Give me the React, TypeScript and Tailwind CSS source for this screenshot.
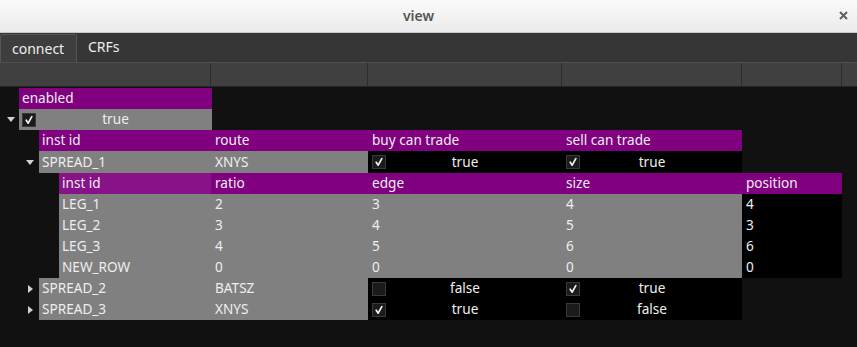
import React from "react";

const Check = () => (
  <svg width="10" height="10" viewBox="0 0 10 10">
    <path d="M2.2 5.2 L4.2 8.2 L7.8 1.6" stroke="#f2f2f2" strokeWidth="1.7" fill="none" strokeLinecap="round" strokeLinejoin="round" />
  </svg>
);

const Box = ({ on }: { on: boolean }) => (
  <div className="w-[14px] h-[14px] bg-[#1b1b1b] border border-[#3a3a3a] flex items-center justify-center shrink-0">
    {on ? <Check /> : null}
  </div>
);

const BoolCell = ({ on, w, bg = "bg-black" }: { on: boolean; w: string; bg?: string }) => (
  <div className={`${w} ${bg} h-full flex items-center pl-[4px]`}>
    <Box on={on} />
    <span className="flex-1 text-center">{on ? "true" : "false"}</span>
    <span className="w-[18px] shrink-0" />
  </div>
);

const Down = () => (
  <svg width="8" height="5" viewBox="0 0 8 5"><path d="M0 0 H8 L4 5 Z" fill="#d0d0d0" /></svg>
);
const Right = () => (
  <svg width="5" height="8" viewBox="0 0 5 8"><path d="M0 0 V8 L5 4 Z" fill="#d0d0d0" /></svg>
);

const Slot = ({ w, children }: { w: string; children?: React.ReactNode }) => (
  <div className={`${w} h-full flex justify-end shrink-0`}>
    <div className="w-[20px] h-full flex items-center justify-center pl-[2px]">{children}</div>
  </div>
);

const Txt = ({ w, bg, children, pl = "pl-[4px]" }: { w: string; bg: string; children?: React.ReactNode; pl?: string }) => (
  <div className={`${w} ${bg} h-full flex items-center ${pl} whitespace-nowrap`}>{children}</div>
);

export default function App() {
  const legs = [
    ["LEG_1", "2", "3", "4", "4"],
    ["LEG_2", "3", "4", "5", "3"],
    ["LEG_3", "4", "5", "6", "6"],
    ["NEW_ROW", "0", "0", "0", "0"],
  ];
  const P = "bg-[#800080]";
  const G = "bg-[#808080]";
  return (
    <div className="w-[857px] h-[347px] bg-[#111111] overflow-hidden text-[13.6px] text-[#eeeeee]" style={{ fontFamily: '"Noto Sans", "Open Sans", sans-serif' }}>
      {/* title bar */}
      <div className="h-[33px] bg-gradient-to-b from-[#fafafa] to-[#ebebeb] border-b border-[#c8c8c8] flex items-center">
        <div className="flex-1 text-center text-[#555555] font-semibold text-[14px] pl-[8px] pb-[2px]">view</div>
        <div className="w-[28px] flex items-center justify-center pb-[2px]">
          <svg width="9" height="9" viewBox="0 0 9 9"><path d="M1 1 L8 8 M8 1 L1 8" stroke="#5e5e5e" strokeWidth="2" /></svg>
        </div>
      </div>
      {/* tab bar */}
      <div className="h-[29px] bg-[#363636] flex items-end text-[14px]">
        <div className="h-[28px] w-[77px] bg-[#3e3e3e] border border-b-0 border-[#555555] rounded-t-[2px] flex items-center pl-[11px] text-[#eeeeee]">connect</div>
        <div className="h-[28px] flex items-center pl-[11px] pb-[3px] text-[#eeeeee]">CRFs</div>
      </div>
      {/* header */}
      <div className="h-[25px] bg-[#404040] border-t border-[#505050] border-b border-b-[#222222] flex">
        <div className="w-[211px] border-r border-[#2c2c2c]" />
        <div className="w-[157px] border-r border-[#2c2c2c]" />
        <div className="w-[194px] border-r border-[#2c2c2c]" />
        <div className="w-[180px] border-r border-[#2c2c2c]" />
        <div className="w-[100px] border-r border-[#2c2c2c]" />
        <div className="flex-1" />
      </div>
      {/* body */}
      <div className="pt-[1px]">
        {/* level 0 */}
        <div className="flex h-[21px]">
          <Slot w="w-[19px]" />
          <Txt w="w-[193px]" bg={P} pl="pl-[3px]">enabled</Txt>
        </div>
        <div className="flex h-[21px]">
          <Slot w="w-[19px]"><Down /></Slot>
          <div className={`w-[193px] ${G} h-full flex items-center pl-[3px]`}>
            <Box on={true} />
            <span className="flex-1 text-center">true</span>
            <span className="w-[17px]" />
          </div>
        </div>
        {/* level 1 header */}
        <div className="flex h-[21px]">
          <Slot w="w-[39px]" />
          <Txt w="w-[172px]" bg={P} pl="pl-[3px]">inst id</Txt>
          <Txt w="w-[157px]" bg={P}>route</Txt>
          <Txt w="w-[194px]" bg={P}>buy can trade</Txt>
          <Txt w="w-[180px]" bg={P}>sell can trade</Txt>
        </div>
        <div className="flex h-[22px]">
          <Slot w="w-[39px]"><Down /></Slot>
          <Txt w="w-[172px]" bg={G} pl="pl-[3px]">SPREAD_1</Txt>
          <Txt w="w-[157px]" bg={G}>XNYS</Txt>
          <BoolCell on={true} w="w-[194px]" />
          <BoolCell on={true} w="w-[180px]" />
        </div>
        {/* level 2 */}
        <div className="flex h-[21px]">
          <Slot w="w-[59px]" />
          <Txt w="w-[152px]" bg="bg-[#881288]" pl="pl-[3px]">inst id</Txt>
          <Txt w="w-[157px]" bg={P}>ratio</Txt>
          <Txt w="w-[194px]" bg={P}>edge</Txt>
          <Txt w="w-[180px]" bg={P}>size</Txt>
          <Txt w="w-[100px]" bg={P}>position</Txt>
        </div>
        {legs.map((r) => (
          <div key={r[0]} className="flex h-[21px]">
            <Slot w="w-[59px]" />
            <Txt w="w-[152px]" bg={G} pl="pl-[3px]">{r[0]}</Txt>
            <Txt w="w-[157px]" bg={G}>{r[1]}</Txt>
            <Txt w="w-[194px]" bg={G}>{r[2]}</Txt>
            <Txt w="w-[180px]" bg={G}>{r[3]}</Txt>
            <Txt w="w-[100px]" bg="bg-black">{r[4]}</Txt>
          </div>
        ))}
        <div className="flex h-[21px]">
          <Slot w="w-[39px]"><Right /></Slot>
          <Txt w="w-[172px]" bg={G} pl="pl-[3px]">SPREAD_2</Txt>
          <Txt w="w-[157px]" bg={G}>BATSZ</Txt>
          <BoolCell on={false} w="w-[194px]" />
          <BoolCell on={true} w="w-[180px]" />
        </div>
        <div className="flex h-[21px]">
          <Slot w="w-[39px]"><Right /></Slot>
          <Txt w="w-[172px]" bg={G} pl="pl-[3px]">SPREAD_3</Txt>
          <Txt w="w-[157px]" bg={G}>XNYS</Txt>
          <BoolCell on={true} w="w-[194px]" />
          <BoolCell on={false} w="w-[180px]" />
        </div>
      </div>
    </div>
  );
}
